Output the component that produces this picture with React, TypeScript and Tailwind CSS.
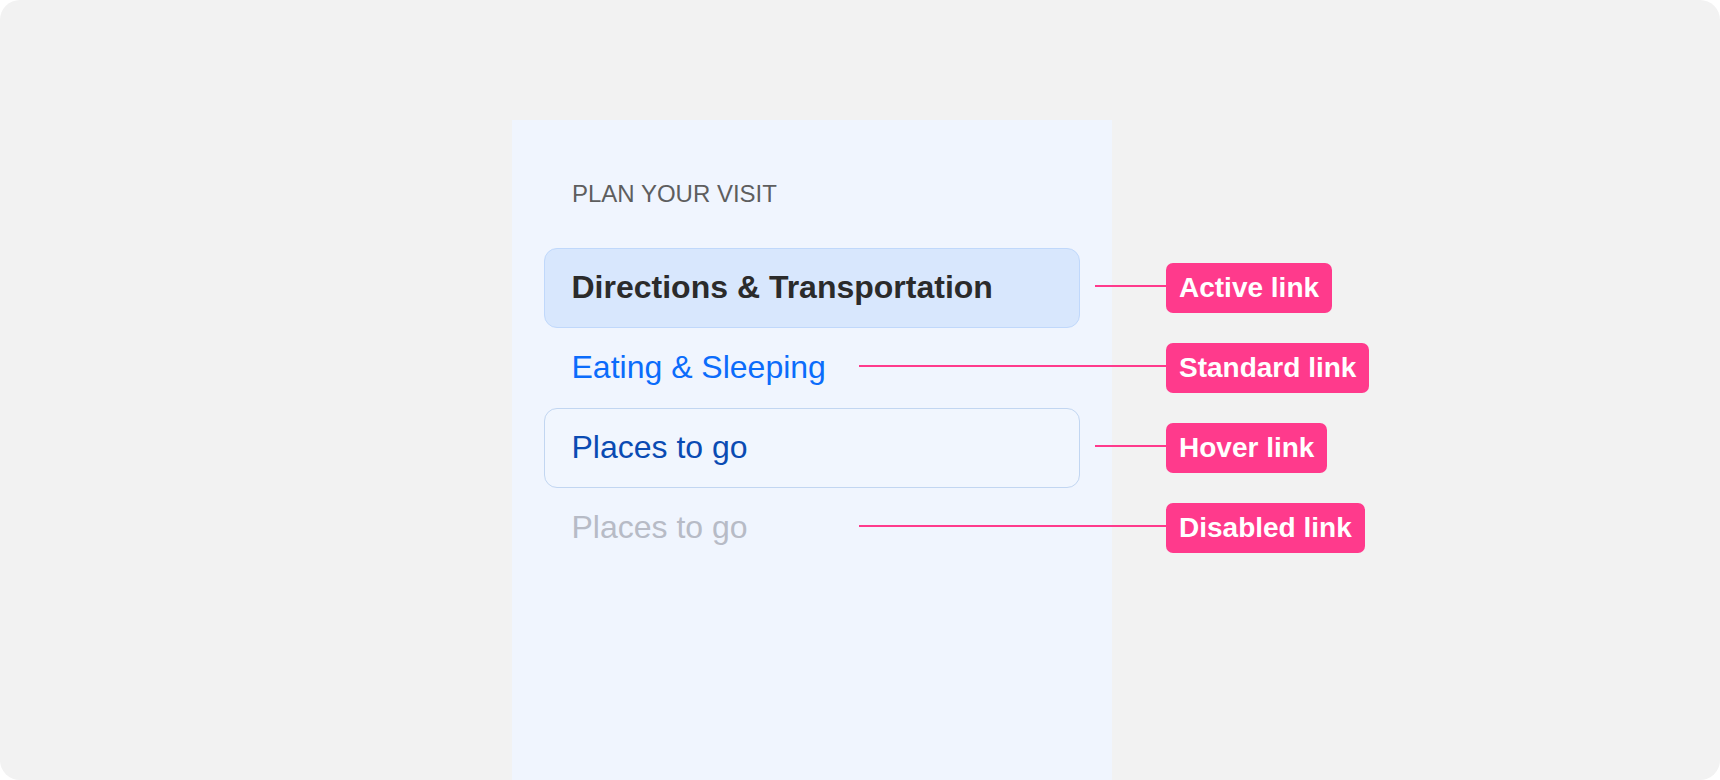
import React from 'react'

type Variant = 'active' | 'standard' | 'hover' | 'disabled'

type Row = {
  label: string
  variant: Variant
  note: string
  // where the callout line starts, measured from the row's left edge
  lineLeft: string
  lineWidth: string
}

const rows: Row[] = [
  { label: 'Directions & Transportation', variant: 'active', note: 'Active link', lineLeft: 'left-[551px]', lineWidth: 'w-[71px]' },
  { label: 'Eating & Sleeping', variant: 'standard', note: 'Standard link', lineLeft: 'left-[315px]', lineWidth: 'w-[307px]' },
  { label: 'Places to go', variant: 'hover', note: 'Hover link', lineLeft: 'left-[551px]', lineWidth: 'w-[71px]' },
  { label: 'Places to go', variant: 'disabled', note: 'Disabled link', lineLeft: 'left-[315px]', lineWidth: 'w-[307px]' }
]

const variantClass: Record<Variant, string> = {
  active: 'border-[#c0d8fb] bg-[#d8e7fd] font-bold text-[#2b2b2b]',
  standard: 'border-transparent text-[#0b6cfb]',
  hover: 'border-[#c2d6f1] bg-[#f1f6fe] text-[#0a4bb3]',
  disabled: 'border-transparent text-[#b7bbc6]'
}

function Callout({ row }: { row: Row }): React.JSX.Element {
  return (
    <div className={`absolute top-0 ${row.lineLeft} flex h-20 items-center`}>
      <div className={`relative -top-[2px] h-[2px] ${row.lineWidth} bg-[#ff3a8c]`} />
      <div className="flex h-[50px] items-center rounded-[7px] bg-[#ff3a8c] px-[13px] text-[28px] font-bold leading-none whitespace-nowrap text-white">
        {row.note}
      </div>
    </div>
  )
}

export default function App(): React.JSX.Element {
  return (
    <div className="h-[780px] w-full bg-white font-['Liberation_Sans',Arial,sans-serif]">
      <div className="h-full overflow-hidden rounded-[20px] bg-[#f2f2f2] pl-[512px] pt-[120px]">
        <nav className="h-[660px] w-[600px] bg-[#f0f5fe] px-8 pt-[60px]">
          <div className="pl-7 text-[24px] leading-[28px] text-[#5e5e5e]">PLAN YOUR VISIT</div>

          <ul className="mt-10 flex flex-col">
            {rows.map((row, i) => (
              <li key={i} className="relative h-20">
                <a
                  className={`flex h-20 items-center rounded-[13px] border-[1.5px] pb-[2px] pl-[26.5px] text-[32px] leading-[40px] ${variantClass[row.variant]}`}
                >
                  {row.label}
                </a>
                <Callout row={row} />
              </li>
            ))}
          </ul>
        </nav>
      </div>
    </div>
  )
}
